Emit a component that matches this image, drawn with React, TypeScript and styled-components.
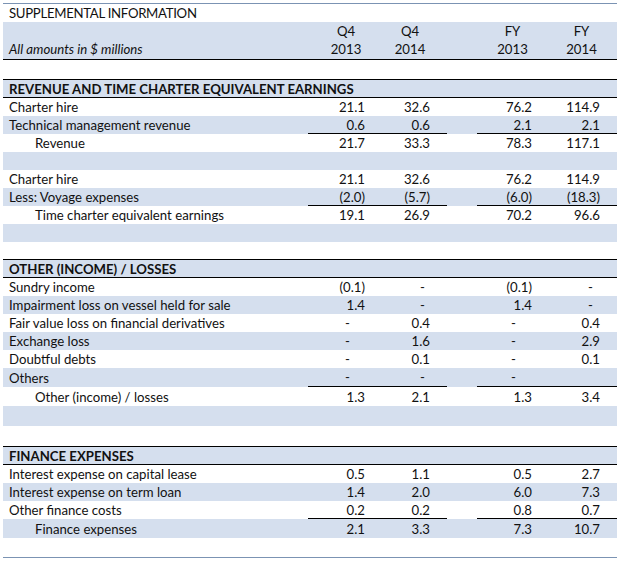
import React from "react"
import styled, { createGlobalStyle } from "styled-components"

const GlobalStyle = createGlobalStyle`
    body {
        margin: 0;
        background: #ffffff;
    }
`

const SHADE = "#d5dfee"
const COLS = "305px 76px 63px 30px 71px 69px"
// right padding of numbers, and of the dash, per value column
const NUM_PAD = [19, 17, 16, 17]
const DASH_PAD = [34, 22, 32, 24]

const Sheet = styled.div`
    width: 614px;
    margin: 3px 0 0 3px;
    border-top: 1px solid #7b93b3;
    border-bottom: 1px solid #7b93b3;
    font-family: Lato, "Open Sans", sans-serif;
    font-size: 13.2px;
    color: #111;
`

const Row = styled.div<{ $shade?: boolean; $h: number; $rules?: boolean }>`
    display: grid;
    grid-template-columns: ${COLS};
    height: ${p => p.$h}px;
    box-sizing: border-box;
    background: ${p => (p.$shade ? SHADE : "transparent")};
    border-top: ${p => (p.$rules ? "1px solid #000" : "none")};
    border-bottom: ${p => (p.$rules ? "1px solid #000" : "none")};
`

const HeadRow = styled.div`
    display: grid;
    grid-template-columns: ${COLS};
    height: 38px;
    box-sizing: border-box;
    background: ${SHADE};
    border-bottom: 1px solid #000;
`

const Label = styled.div<{ $indent?: boolean; $bold?: boolean; $italic?: boolean; $caps?: boolean }>`
    display: flex;
    align-items: center;
    padding-left: ${p => (p.$indent ? 32 : 6)}px;
    font-weight: ${p => (p.$bold ? 700 : 400)};
    font-style: ${p => (p.$italic ? "italic" : "normal")};
    letter-spacing: ${p => (p.$caps ? "-0.3px" : "normal")};
    white-space: nowrap;
`

const HeadLabel = styled(Label)`
    align-items: flex-end;
    padding-bottom: 2px;
`

const HeadCell = styled.div<{ $shift: number }>`
    display: flex;
    flex-direction: column;
    align-items: center;
    padding-right: ${p => p.$shift}px;
    line-height: 18px;
`

const Num = styled.div<{ $pad: number; $line?: boolean }>`
    display: flex;
    align-items: center;
    justify-content: flex-end;
    padding-right: ${p => p.$pad}px;
    box-sizing: border-box;
    border-bottom: ${p => (p.$line ? "1px solid #000" : "none")};
    white-space: nowrap;
`

const Spacer = styled.div``

type Item = {
    label?: string
    values?: string[]
    shade?: boolean
    indent?: boolean
    line?: boolean
    h?: number
}

type Section = { title: string; items: Item[] }

const sections: Section[] = [
    {
        title: "REVENUE AND TIME CHARTER EQUIVALENT EARNINGS",
        items: [
            { label: "Charter hire", values: ["21.1", "32.6", "76.2", "114.9"] },
            { label: "Technical management revenue", values: ["0.6", "0.6", "2.1", "2.1"], shade: true, line: true },
            { label: "Revenue", values: ["21.7", "33.3", "78.3", "117.1"], indent: true },
            { shade: true },
            { label: "Charter hire", values: ["21.1", "32.6", "76.2", "114.9"] },
            { label: "Less: Voyage expenses", values: ["(2.0)", "(5.7)", "(6.0)", "(18.3)"], shade: true, line: true },
            { label: "Time charter equivalent earnings", values: ["19.1", "26.9", "70.2", "96.6"], indent: true },
            { shade: true },
            { h: 17 },
        ],
    },
    {
        title: "OTHER (INCOME) / LOSSES",
        items: [
            { label: "Sundry income", values: ["(0.1)", "-", "(0.1)", "-"] },
            { label: "Impairment loss on vessel held for sale", values: ["1.4", "-", "1.4", "-"], shade: true },
            { label: "Fair value loss on financial derivatives", values: ["-", "0.4", "-", "0.4"] },
            { label: "Exchange loss", values: ["-", "1.6", "-", "2.9"], shade: true },
            { label: "Doubtful debts", values: ["-", "0.1", "-", "0.1"] },
            { label: "Others", values: ["-", "-", "-", ""], shade: true, line: true, h: 19 },
            { label: "Other (income) / losses", values: ["1.3", "2.1", "1.3", "3.4"], indent: true, h: 19 },
            { shade: true, h: 20 },
            { h: 20 },
        ],
    },
    {
        title: "FINANCE EXPENSES",
        items: [
            { label: "Interest expense on capital lease", values: ["0.5", "1.1", "0.5", "2.7"] },
            { label: "Interest expense on term loan", values: ["1.4", "2.0", "6.0", "7.3"], shade: true },
            { label: "Other finance costs", values: ["0.2", "0.2", "0.8", "0.7"], line: true },
            { label: "Finance expenses", values: ["2.1", "3.3", "7.3", "10.7"], shade: true, indent: true, h: 19 },
            { h: 19 },
        ],
    },
]

const headers = [
    { top: "Q4", year: "2013", shift: 0 },
    { top: "Q4", year: "2014", shift: 11 },
    { top: "FY", year: "2013", shift: 0 },
    { top: "FY", year: "2014", shift: 2 },
]

const Values = ({ values, line }: { values?: string[]; line?: boolean }) => {
    const cells = [0, 1, 2, 3].map(i => {
        const v = values ? values[i] : ""
        const pad = v === "-" ? DASH_PAD[i] : NUM_PAD[i]
        return <Num key={i} $pad={pad} $line={line}>{v}</Num>
    })
    return (
        <>
            {cells[0]}
            {cells[1]}
            <Spacer />
            {cells[2]}
            {cells[3]}
        </>
    )
}

const App = () => {
    return (
        <>
            <GlobalStyle />
            <Sheet>
                <Row $h={18}>
                    <Label $caps>SUPPLEMENTAL INFORMATION</Label>
                </Row>
                <HeadRow>
                    <HeadLabel $italic>All amounts in $ millions</HeadLabel>
                    {headers.slice(0, 2).map((c, i) => (
                        <HeadCell key={i} $shift={c.shift}>
                            <span>{c.top}</span>
                            <span>{c.year}</span>
                        </HeadCell>
                    ))}
                    <Spacer />
                    {headers.slice(2).map((c, i) => (
                        <HeadCell key={i} $shift={c.shift}>
                            <span>{c.top}</span>
                            <span>{c.year}</span>
                        </HeadCell>
                    ))}
                </HeadRow>
                <Row $h={19} />
                {sections.map(s => (
                    <React.Fragment key={s.title}>
                        <Row $h={19} $shade $rules>
                            <Label $bold>{s.title}</Label>
                        </Row>
                        {s.items.map((it, i) => (
                            <Row key={i} $h={it.h ?? 18} $shade={it.shade}>
                                <Label $indent={it.indent}>{it.label}</Label>
                                {it.label && <Values values={it.values} line={it.line} />}
                            </Row>
                        ))}
                    </React.Fragment>
                ))}
            </Sheet>
        </>
    )
}

export default App
